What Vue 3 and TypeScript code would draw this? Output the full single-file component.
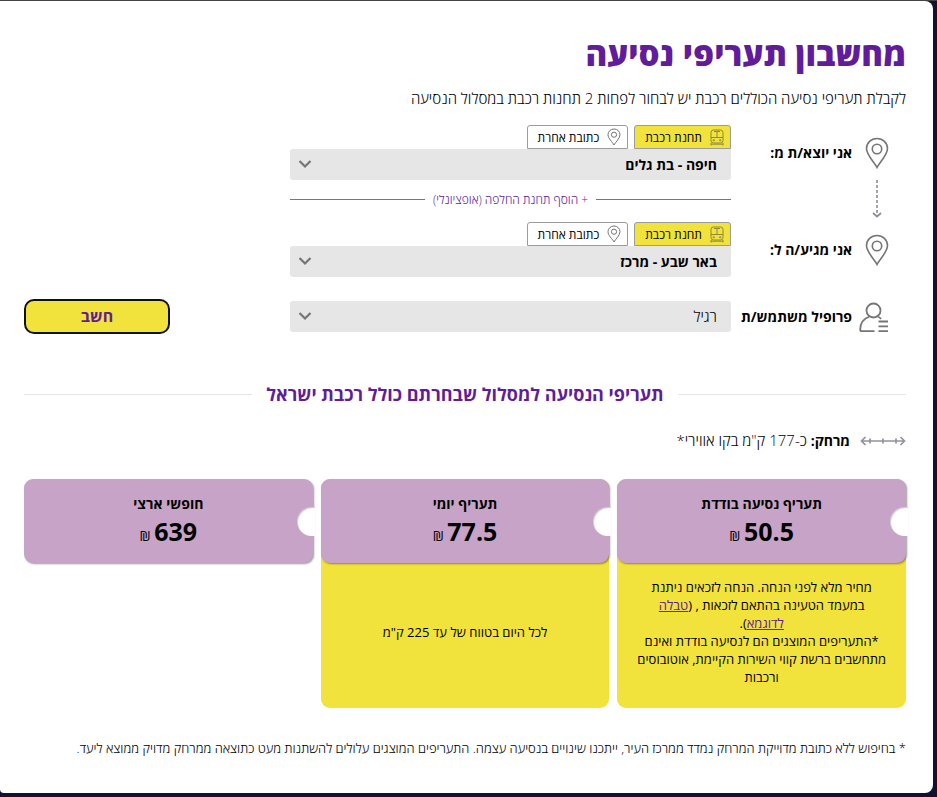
<script setup lang="ts">
import { ref } from 'vue'

type Place = 'station' | 'address'

interface Stop {
  id: string
  label: string
  place: Place
  value: string
}

interface Fare {
  id: string
  title: string
  price: string
}

const stations: string[] = ['חיפה - בת גלים', 'באר שבע - מרכז']

const stops = ref<Stop[]>([
  { id: 'origin', label: 'אני יוצא/ת מ:', place: 'station', value: stations[0] },
  { id: 'destination', label: 'אני מגיע/ה ל:', place: 'station', value: stations[1] },
])

const profile = ref('רגיל')

const fares: Fare[] = [
  { id: 'single', title: 'תעריף נסיעה בודדת', price: '50.5' },
  { id: 'daily', title: 'תעריף יומי', price: '77.5' },
  { id: 'national', title: 'חופשי ארצי', price: '639' },
]
</script>

<template>
  <main class="page" dir="rtl" lang="he">
    <div class="panel">
      <h1>מחשבון תעריפי נסיעה</h1>
      <p class="intro">לקבלת תעריפי נסיעה הכוללים רכבת יש לבחור לפחות 2 תחנות רכבת במסלול הנסיעה</p>

      <form class="form" @submit.prevent>
        <template v-for="(stop, index) in stops" :key="stop.id">
          <div v-if="index > 0" class="row transfer">
            <svg class="icon" width="24" height="38" viewBox="0 0 24 38" fill="none" stroke="#8d8c98">
              <path d="M12 0V36" stroke-width="1.600" stroke-dasharray="3 2" />
              <path d="M8 33L12 36.500L16 33" stroke-width="1.800" />
            </svg>
            <button type="button" class="add">+ הוסף תחנת החלפה (אופציונלי)</button>
          </div>
          <div class="row">
            <svg class="icon" width="24" height="32" viewBox="0 0 24 32" fill="none" stroke="#757575" stroke-width="1.6">
              <path d="M12 30.500C9.500 25.500 1.500 18 1.500 11.500a10.500 10 0 0 1 21 0C22.500 18 14.500 25.500 12 30.500Z" />
              <circle cx="12" cy="12" r="4.700" />
            </svg>
            <label class="label" :for="stop.id">{{ stop.label }}</label>
            <div class="field">
              <div class="tabs">
                <button type="button" class="tab" :class="{ active: stop.place === 'station' }" @click="stop.place = 'station'">
                  <svg width="14" height="17" viewBox="0 0 14 17" fill="none" stroke="#85803e" stroke-width=".9">
                    <rect x="1" y="1" width="12" height="13" rx="2.500" />
                    <path d="M4 2.500H10M7 2.500V8.500M1 8.500H13M1 14V16.500M13 14V16.500M1 15.200H13" />
                    <circle cx="3.800" cy="11.300" r=".7" />
                    <circle cx="10.200" cy="11.300" r=".7" />
                  </svg>
                  תחנת רכבת
                </button>
                <button type="button" class="tab" :class="{ active: stop.place === 'address' }" @click="stop.place = 'address'">
                  <svg width="14" height="18" viewBox="0 0 14 18" fill="none" stroke="#757575">
                    <path d="M7 17C5.500 14 1 10.500 1 6.700a6 5.700 0 0 1 12 0C13 10.500 8.500 14 7 17Z" />
                    <circle cx="7" cy="6.700" r="2.600" />
                  </svg>
                  כתובת אחרת
                </button>
              </div>
              <div class="picker">
                <select :id="stop.id" v-model="stop.value" class="strong">
                  <option v-for="name in stations" :key="name" :value="name">{{ name }}</option>
                </select>
                <svg class="chevron" width="14" height="10" viewBox="0 0 14 10" fill="none" stroke="#757575" stroke-width="2.200">
                  <path d="M1.500 2L7 7.500L12.500 2" />
                </svg>
              </div>
            </div>
          </div>
        </template>

        <div class="row profile">
          <svg class="icon" width="30" height="33" viewBox="0 0 30 33" fill="none" stroke="#757575" stroke-width="1.800">
            <circle cx="14.500" cy="10.500" r="7" />
            <path d="M10.500 16.500C5 18.500 1.200 23 1.200 29.500Q1.200 31.200 2.800 31.200H15.500M18.500 16.500Q21 17.200 22 19M19.500 21.500H29M19.500 26.300H29M19.500 31.200H29" />
          </svg>
          <label class="label" for="profile">פרופיל משתמש/ת</label>
          <div class="picker">
            <select id="profile" v-model="profile">
              <option>רגיל</option>
            </select>
            <svg class="chevron" width="14" height="10" viewBox="0 0 14 10" fill="none" stroke="#757575" stroke-width="2.200">
              <path d="M1.500 2L7 7.500L12.500 2" />
            </svg>
          </div>
          <button type="submit" class="submit">חשב</button>
        </div>
      </form>

      <h2>תעריפי הנסיעה למסלול שבחרתם כולל רכבת ישראל</h2>

      <p class="distance">
        <svg width="46" height="10" viewBox="0 0 46 10" fill="none" stroke="#93929e" stroke-width="1.700">
          <path d="M2 5H44M5.500 1L1.500 5L5.500 9M40.500 1L44.500 5L40.500 9M10 2.500V7.500M23 2.500V7.500M36 2.500V7.500" />
        </svg>
        <span><strong>מרחק:</strong> כ-177 ק"מ בקו אווירי*</span>
      </p>

      <section class="fares">
        <article v-for="fare in fares" :key="fare.id" class="fare" :class="fare.id">
          <header class="ticket">
            <h3>{{ fare.title }}</h3>
            <p class="price"><b>{{ fare.price }}</b> ₪</p>
          </header>
          <div v-if="fare.id === 'single'" class="details">
            <p>
              מחיר מלא לפני הנחה. הנחה לזכאים ניתנת במעמד הטעינה בהתאם לזכאות , (<a href="#">טבלה<br />לדוגמא</a>).<br />
              *התעריפים המוצגים הם לנסיעה בודדת ואינם מתחשבים ברשת קווי השירות הקיימת, אוטובוסים ורכבות
            </p>
          </div>
          <div v-else-if="fare.id === 'daily'" class="details">
            <p>לכל היום בטווח של עד 225 ק"מ</p>
          </div>
        </article>
      </section>

      <p class="footnote">* בחיפוש ללא כתובת מדוייקת המרחק נמדד ממרכז העיר, ייתכנו שינויים בנסיעה עצמה. התעריפים המוצגים עלולים להשתנות מעט כתוצאה ממרחק מדויק ממוצא ליעד.</p>
    </div>
  </main>
</template>

<style>
body {
  margin: 0;
  background: #0e1235;
}
</style>

<style scoped>
.page {
  padding: 0 4px 4px 0;
  border-top: 1px solid #444;
  font-family: 'Open Sans', 'Liberation Sans', sans-serif;
  font-size: 15px;
  font-weight: 300;
  color: #000;
}

.panel {
  padding: 29px 27px 35px 24px;
  border-radius: 0 8px 8px 4px;
  background: #fff;
}

h1,
h2,
h3,
p {
  margin: 0;
}

h1 {
  font-size: 33px;
  font-weight: 800;
  line-height: 48px;
  color: #611c9b;
}

.intro {
  margin-top: 10px;
  line-height: 20px;
}

.form {
  margin-top: 17px;
}

.row {
  display: grid;
  grid-template-columns: 54px 121px 50% 1fr;
  align-items: center;
}

.icon {
  margin-inline-start: 17px;
}

.label {
  font-size: 14px;
  font-weight: 700;
  white-space: nowrap;
}

.tabs {
  display: flex;
  gap: 6px;
}

.tab {
  display: flex;
  align-items: center;
  gap: 8px;
  height: 24px;
  padding: 0 6px 0 10px;
  border: 1px solid #9c9c9c;
  border-radius: 3px 3px 0 0;
  background: #fff;
  font: 12px 'Open Sans', 'Liberation Sans', sans-serif;
  color: #000;
}

.tab.active {
  background: #f1e23c;
}

.picker {
  position: relative;
}

select {
  display: block;
  box-sizing: border-box;
  width: 100%;
  height: 31px;
  padding: 0 14px 2px 30px;
  border: 0;
  border-radius: 3px;
  appearance: none;
  background: #e6e6e6;
  font: 300 15px 'Open Sans', 'Liberation Sans', sans-serif;
  color: #000;
}

.strong {
  border-top-right-radius: 0;
  padding-bottom: 0;
  font-size: 14px;
  font-weight: 700;
}

.chevron {
  position: absolute;
  left: 8px;
  top: 10px;
  pointer-events: none;
}

.transfer {
  height: 38px;
  padding-bottom: 4px;
}

.add {
  grid-column: 3;
  display: flex;
  align-items: center;
  gap: 8px;
  padding: 0;
  border: 0;
  background: none;
  font: 300 12px 'Open Sans', 'Liberation Sans', sans-serif;
  color: #611c9b;
  white-space: nowrap;
}

.add::before,
.add::after {
  content: '';
  flex: 1;
  border-top: 1px solid #77738a;
}

.profile {
  margin-top: 22px;
}

.submit {
  justify-self: end;
  width: 146px;
  height: 35px;
  padding-bottom: 2px;
  border: 2px solid #111;
  border-radius: 10px;
  background: #f1e23c;
  font: 700 16px 'Open Sans', 'Liberation Sans', sans-serif;
  color: #611c9b;
}

h2 {
  display: flex;
  align-items: center;
  gap: 14px;
  margin-top: 48px;
  font-size: 18px;
  font-weight: 700;
  line-height: 24px;
  color: #611c9b;
}

h2::before,
h2::after {
  content: '';
  flex: 1;
  border-top: 1px solid #e4e4e4;
}

.distance {
  display: flex;
  align-items: center;
  gap: 10px;
  margin-top: 24px;
  line-height: 20px;
}

.distance strong {
  font-size: 14px;
  font-weight: 700;
}

.fares {
  display: grid;
  grid-template-columns: repeat(3, 1fr);
  gap: 8px;
  margin-top: 28px;
}

.fare {
  display: flex;
  flex-direction: column;
  min-height: 229px;
  border-radius: 9px;
  background: #f1e23c;
}

.fare.national {
  background: none;
}

.ticket {
  position: relative;
  height: 84px;
  box-sizing: border-box;
  padding-top: 14px;
  border-radius: 9px;
  background: #c7a3c7;
  box-shadow: 1px 1px 2px rgba(0, 0, 0, 0.4);
  text-align: center;
}

.ticket::after {
  content: '';
  position: absolute;
  top: 28px;
  right: -2px;
  width: 18px;
  height: 29px;
  border-radius: 15px 0 0 15px;
  background: #fff;
  box-shadow: inset 1px 1px 1px rgba(0, 0, 0, 0.2);
}

h3 {
  font-size: 14px;
  font-weight: 700;
  line-height: 22px;
}

.price {
  font-size: 14px;
  font-weight: 400;
  line-height: 32px;
}

.price b {
  font-size: 25px;
  font-weight: 700;
}

.details {
  flex: 1;
  display: flex;
  align-items: center;
  justify-content: center;
  padding: 0 16px 7px;
  font-size: 13px;
  font-weight: 400;
  line-height: 18px;
  text-align: center;
}

.details a {
  color: #611c9b;
}

.footnote {
  margin-top: 30px;
  font-size: 13px;
  line-height: 20px;
}
</style>
